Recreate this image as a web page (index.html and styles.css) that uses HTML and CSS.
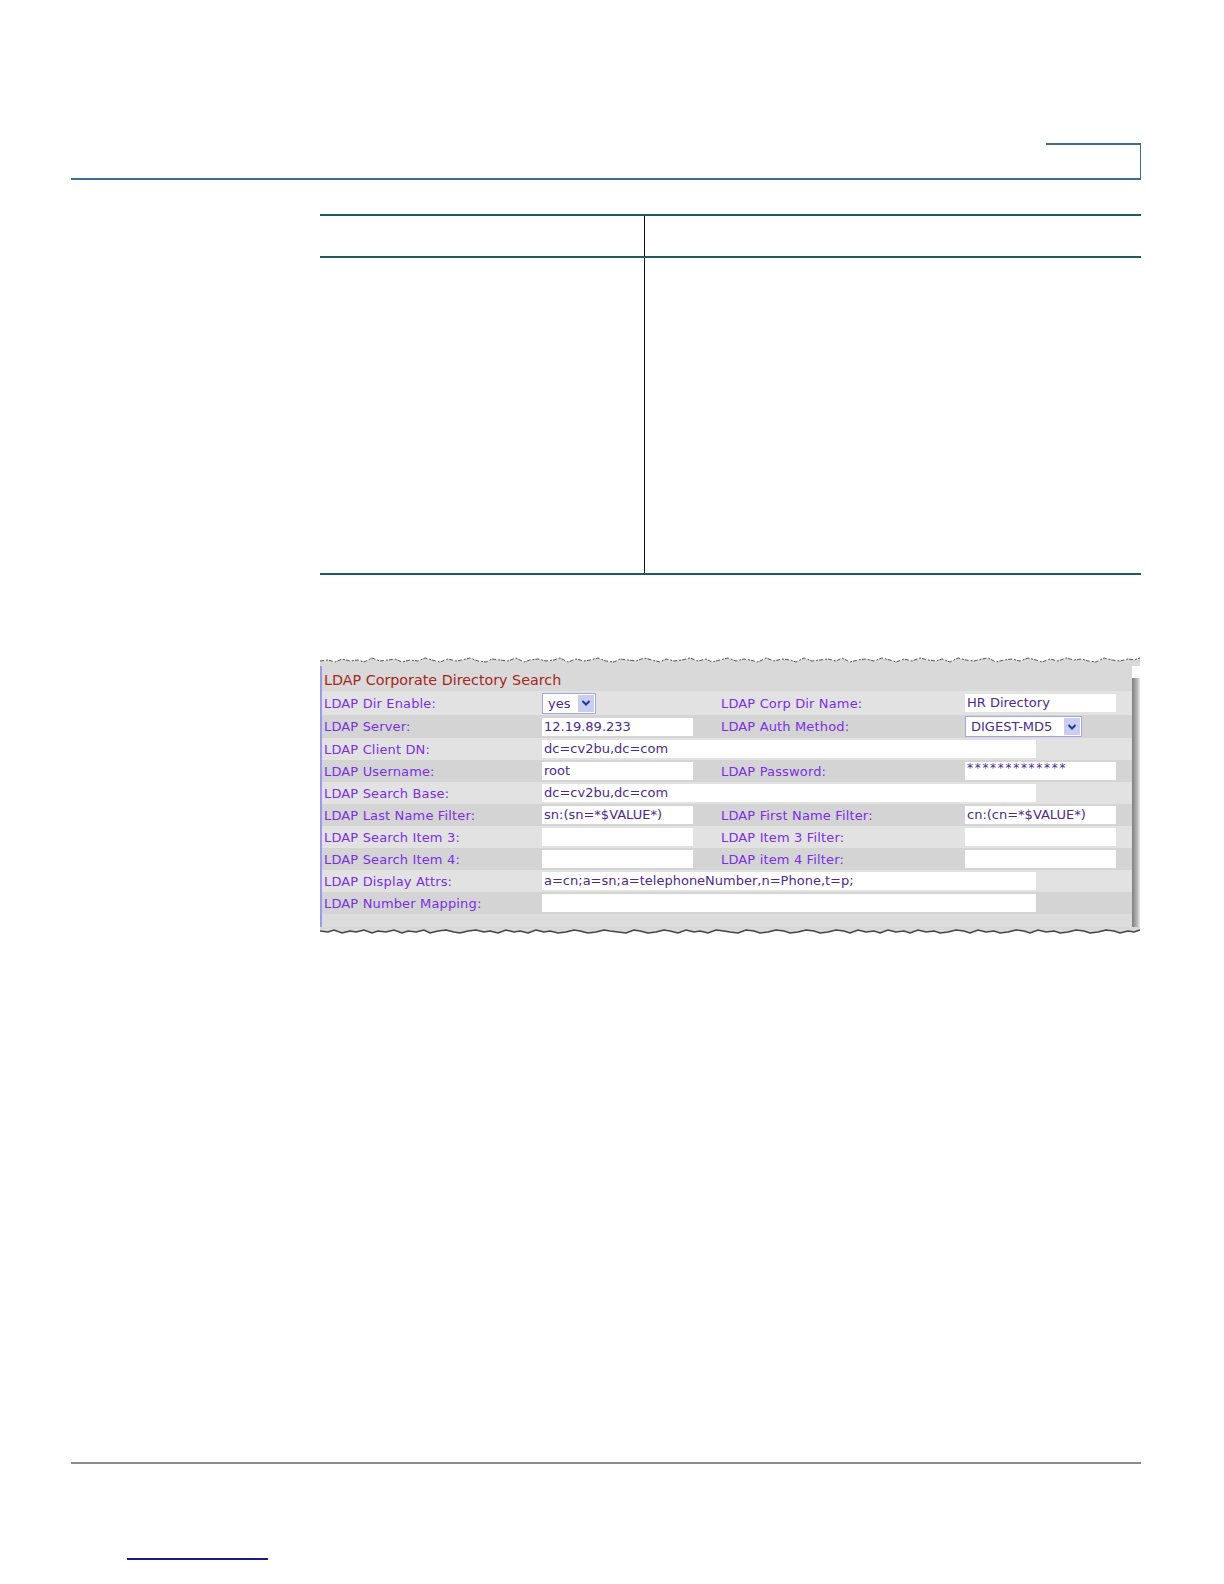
FILE: index.html
```html
<!DOCTYPE html>
<html>
<head>
<meta charset="utf-8">
<link rel="stylesheet" href="styles.css">
</head>
<body>
<div class="page">
  <div class="hdr"><div class="hdr-tab"></div></div>

  <div class="tbl">
    <div class="trow thead"><div class="cell"></div><div class="cell cell-r"></div></div>
    <div class="trow tbody"><div class="cell"></div><div class="cell cell-r"></div></div>
  </div>

  <div class="shot">
    <svg class="torn torn-top" width="820" height="10" viewBox="0 0 820 10" preserveAspectRatio="none">
      <polygon fill="#d9d9d9" points="0,10 0,5 8,4 15,6 22,3 30,5 38,4 44,6 52,2 60,5 68,4 75,3 82,6 90,4 98,5 105,2 112,4 120,6 128,3 136,5 142,4 150,2 158,5 166,6 172,3 180,4 188,5 196,2 204,6 210,4 218,3 226,5 234,4 240,2 248,6 256,3 264,5 270,4 278,2 286,5 294,6 300,3 308,4 316,5 324,2 332,4 340,6 346,3 354,5 362,4 370,2 378,5 386,3 392,6 400,4 408,2 416,5 424,3 430,4 438,6 446,2 454,5 462,3 470,4 476,6 484,2 492,5 500,4 508,3 516,5 522,2 530,6 538,4 546,3 554,5 562,2 570,4 576,6 584,3 592,5 600,2 608,4 616,5 622,3 630,6 638,2 646,4 654,5 662,3 668,2 676,6 684,4 692,3 700,5 708,2 716,4 722,6 730,3 738,5 746,2 754,4 762,3 768,5 776,6 784,2 792,4 800,5 808,3 814,4 820,2 820,10"/>
      <polyline fill="none" stroke="#555" stroke-width="1" stroke-dasharray="4,2,2,1" points="0,5 8,4 15,6 22,3 30,5 38,4 44,6 52,2 60,5 68,4 75,3 82,6 90,4 98,5 105,2 112,4 120,6 128,3 136,5 142,4 150,2 158,5 166,6 172,3 180,4 188,5 196,2 204,6 210,4 218,3 226,5 234,4 240,2 248,6 256,3 264,5 270,4 278,2 286,5 294,6 300,3 308,4 316,5 324,2 332,4 340,6 346,3 354,5 362,4 370,2 378,5 386,3 392,6 400,4 408,2 416,5 424,3 430,4 438,6 446,2 454,5 462,3 470,4 476,6 484,2 492,5 500,4 508,3 516,5 522,2 530,6 538,4 546,3 554,5 562,2 570,4 576,6 584,3 592,5 600,2 608,4 616,5 622,3 630,6 638,2 646,4 654,5 662,3 668,2 676,6 684,4 692,3 700,5 708,2 716,4 722,6 730,3 738,5 746,2 754,4 762,3 768,5 776,6 784,2 792,4 800,5 808,3 814,4 820,2"/>
    </svg>
    <div class="shot-body">
      <div class="panel">
        <div class="title">LDAP Corporate Directory Search</div>
        <div class="row row-light tall">
          <div class="lbl">LDAP Dir Enable:</div>
          <div class="c1"><div class="sel sel-yes"><span class="sel-val">yes</span><span class="sel-btn"><svg width="10" height="8" viewBox="0 0 10 8"><path d="M1.5 2 L5 5.5 L8.5 2" fill="none" stroke="#1f3a93" stroke-width="2"/></svg></span></div></div>
          <div class="lbl2">LDAP Corp Dir Name:</div>
          <div class="inp">HR Directory</div>
        </div>
        <div class="row row-dark tall2">
          <div class="lbl">LDAP Server:</div>
          <div class="c1"><div class="inp">12.19.89.233</div></div>
          <div class="lbl2">LDAP Auth Method:</div>
          <div class="sel sel-auth"><span class="sel-val">DIGEST-MD5</span><span class="sel-btn"><svg width="10" height="8" viewBox="0 0 10 8"><path d="M1.5 2 L5 5.5 L8.5 2" fill="none" stroke="#1f3a93" stroke-width="2"/></svg></span></div>
        </div>
        <div class="row row-light">
          <div class="lbl">LDAP Client DN:</div>
          <div class="inp inp-long">dc=cv2bu,dc=com</div>
        </div>
        <div class="row row-dark">
          <div class="lbl">LDAP Username:</div>
          <div class="c1"><div class="inp">root</div></div>
          <div class="lbl2">LDAP Password:</div>
          <div class="inp inp-pw">*************</div>
        </div>
        <div class="row row-light">
          <div class="lbl">LDAP Search Base:</div>
          <div class="inp inp-long">dc=cv2bu,dc=com</div>
        </div>
        <div class="row row-dark">
          <div class="lbl">LDAP Last Name Filter:</div>
          <div class="c1"><div class="inp">sn:(sn=*$VALUE*)</div></div>
          <div class="lbl2">LDAP First Name Filter:</div>
          <div class="inp">cn:(cn=*$VALUE*)</div>
        </div>
        <div class="row row-light">
          <div class="lbl">LDAP Search Item 3:</div>
          <div class="c1"><div class="inp"></div></div>
          <div class="lbl2">LDAP Item 3 Filter:</div>
          <div class="inp"></div>
        </div>
        <div class="row row-dark">
          <div class="lbl">LDAP Search Item 4:</div>
          <div class="c1"><div class="inp"></div></div>
          <div class="lbl2">LDAP item 4 Filter:</div>
          <div class="inp"></div>
        </div>
        <div class="row row-light">
          <div class="lbl">LDAP Display Attrs:</div>
          <div class="inp inp-long">a=cn;a=sn;a=telephoneNumber,n=Phone,t=p;</div>
        </div>
        <div class="row row-dark">
          <div class="lbl">LDAP Number Mapping:</div>
          <div class="inp inp-long"></div>
        </div>
        <div class="panel-foot"></div>
      </div>
      <div class="shadow"></div>
    </div>
    <svg class="torn torn-bot" width="820" height="10" viewBox="0 0 820 10" preserveAspectRatio="none">
      <polygon fill="#d9d9d9" points="0,0 0,4 8,5 14,3 22,6 30,4 36,5 44,3 52,6 58,4 66,5 74,3 82,6 88,4 96,5 104,3 110,6 118,4 126,3 134,5 140,6 148,4 156,3 164,5 170,4 178,6 186,3 194,5 200,4 208,6 216,3 224,5 230,4 238,6 246,5 254,3 260,4 268,6 276,5 284,3 290,4 298,5 306,6 314,3 320,4 328,6 336,5 344,3 350,4 358,6 366,3 374,5 380,4 388,6 396,3 404,4 410,5 418,6 426,3 434,4 440,6 448,5 456,3 464,4 470,6 478,5 486,3 494,4 500,6 508,5 516,3 524,4 530,6 538,3 546,5 554,4 560,6 568,3 576,5 584,4 590,6 598,3 606,5 614,4 620,6 628,5 636,3 644,4 650,6 658,3 666,5 674,4 680,6 688,5 696,3 704,4 710,6 718,3 726,5 734,4 740,6 748,5 756,3 764,4 770,6 778,5 786,3 794,4 800,6 808,4 814,5 820,3 820,0"/>
      <polyline fill="none" stroke="#444" stroke-width="1.4" points="0,4 8,5 14,3 22,6 30,4 36,5 44,3 52,6 58,4 66,5 74,3 82,6 88,4 96,5 104,3 110,6 118,4 126,3 134,5 140,6 148,4 156,3 164,5 170,4 178,6 186,3 194,5 200,4 208,6 216,3 224,5 230,4 238,6 246,5 254,3 260,4 268,6 276,5 284,3 290,4 298,5 306,6 314,3 320,4 328,6 336,5 344,3 350,4 358,6 366,3 374,5 380,4 388,6 396,3 404,4 410,5 418,6 426,3 434,4 440,6 448,5 456,3 464,4 470,6 478,5 486,3 494,4 500,6 508,5 516,3 524,4 530,6 538,3 546,5 554,4 560,6 568,3 576,5 584,4 590,6 598,3 606,5 614,4 620,6 628,5 636,3 644,4 650,6 658,3 666,5 674,4 680,6 688,5 696,3 704,4 710,6 718,3 726,5 734,4 740,6 748,5 756,3 764,4 770,6 778,5 786,3 794,4 800,6 808,4 814,5 820,3"/>
    </svg>
  </div>

  <div class="ftr"></div>
  <div class="ftr-link"></div>
</div>
</body>
</html>
```
FILE: styles.css
```css
html, body {
  margin: 0;
  padding: 0;
  background: #ffffff;
}
.page {
  width: 1224px;
  height: 1584px;
  overflow: hidden;
  font-family: "DejaVu Sans", Verdana, sans-serif;
}
.hdr {
  margin: 143px 83px 0 71px;
  height: 35px;
  border-bottom: 2px solid #3b6f8b;
  display: flex;
  justify-content: flex-end;
}
.hdr-tab {
  width: 94px;
  height: 33px;
  border-top: 2px solid #3b6f8b;
  border-right: 1px solid #3b6f8b;
}
.tbl {
  margin: 34px 83px 0 320px;
  border-top: 2px solid #1f5a60;
}
.trow {
  display: grid;
  grid-template-columns: 324px 1fr;
  border-bottom: 2px solid #1f5a60;
}
.thead { height: 40px; }
.tbody { height: 315px; }
.cell-r { border-left: 1px solid #111; }

.shot {
  margin: 81px 0 0 320px;
  width: 820px;
}
.torn { display: block; }
.shot-body {
  display: flex;
}
.panel {
  width: 810px;
  background: #d9d9d9;
  border-left: 2px solid #9a9ae6;
  padding-top: 3px;
}
.shadow {
  width: 8px;
  margin-top: 12px;
  background: linear-gradient(to right, #7e7e7e, #bdbdbd 70%, #eeeeee);
}
.title {
  height: 22px;
  line-height: 22px;
  padding-left: 2px;
  font-size: 14.3px;
  color: #a8241e;
  white-space: nowrap;
}
.row {
  display: flex;
  align-items: center;
  height: 22px;
  padding-left: 2px;
  font-size: 13px;
}
.row.tall { height: 24px; }
.row.tall2 { height: 23px; }
.row-light { background: #e2e2e2; }
.row-dark { background: #d4d4d4; }
.lbl {
  width: 218px;
  color: #7a2fe6;
  white-space: nowrap;
  letter-spacing: 0.15px;
}
.c1 {
  width: 179px;
}
.lbl2 {
  width: 244px;
  color: #7a2fe6;
  white-space: nowrap;
  letter-spacing: 0.15px;
}
.inp {
  width: 149px;
  height: 18px;
  line-height: 18px;
  padding-left: 2px;
  background: #ffffff;
  color: #4a2a8e;
  white-space: nowrap;
  overflow: hidden;
}
.inp-long { width: 492px; }
.inp-pw {
  font-size: 12px;
  letter-spacing: 1.7px;
  line-height: 13px;
}
.sel {
  display: flex;
  align-items: center;
  height: 19px;
  background: #ffffff;
  border: 1px solid #a6a6dc;
  color: #4a2a8e;
}
.sel-yes { width: 52px; }
.sel-auth { width: 115px; }
.sel-val {
  flex: 1;
  padding-left: 5px;
  line-height: 19px;
  white-space: nowrap;
}
.sel-btn {
  width: 16px;
  height: 17px;
  margin-right: 1px;
  background: #c9cdf2;
  display: flex;
  align-items: center;
  justify-content: center;
}
.sel-btn svg { display: block; }
.panel-foot {
  height: 13px;
  background: #dcdcdc;
}
.ftr {
  margin: 525px 83px 0 71px;
  height: 0;
  border-top: 2px solid #8c8c8c;
}
.ftr-link {
  margin: 94px 0 0 127px;
  width: 141px;
  border-top: 2px solid #1c1c80;
}
```
